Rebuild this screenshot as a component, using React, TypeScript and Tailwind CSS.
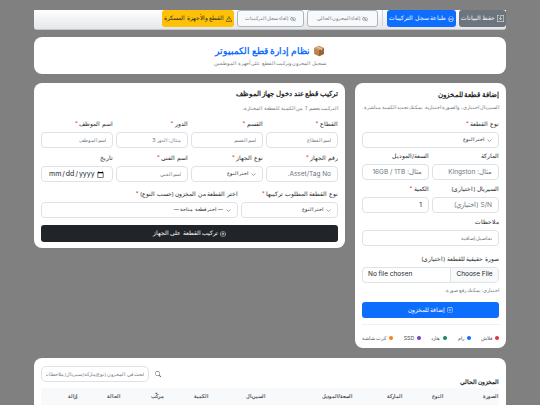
import React from 'react';
import { BsSave, BsPrinter, BsEyeSlash, BsExclamationTriangle, BsGear, BsPlusCircle, BsSearch, BsChevronDown } from 'react-icons/bs';

const labelCls = 'block text-[5.6px] leading-[8px] text-[#212529] mb-[4px]';
const inputCls = 'block w-full h-[16px] bg-white border border-[#dee2e6] rounded-[4px] px-[6px] text-[#212529] placeholder:text-[#6c757d] outline-none';

const Req = () => <span className="text-[#dc3545]"> *</span>;

// latin placeholders read larger than the arabic only ones
const Field: React.FC<{ label: string; req?: boolean; placeholder?: string; value?: string; latin?: boolean }> = ({ label, req, placeholder, value, latin }) => (
  <div>
    <label className={labelCls}>{label}{req && <Req />}</label>
    <input className={`${inputCls} ${latin ? 'text-[6.5px]' : 'text-[5.2px]'}`} placeholder={placeholder} defaultValue={value} />
  </div>
);

const SelectField: React.FC<{ label: string; text: string; req?: boolean }> = ({ label, text, req }) => (
  <div>
    <label className={labelCls}>{label}{req && <Req />}</label>
    <div className="h-[16px] bg-white border border-[#dee2e6] rounded-[4px] flex items-center gap-[3px] px-[6px] text-[5.2px] text-[#212529]">
      <BsChevronDown className="w-[5px] h-[5px]" />
      <span>{text}</span>
    </div>
  </div>
);

const columns = ['الصورة', 'النوع', 'الماركة', 'السعة/الموديل', 'السيريال', 'الكمية', 'مركّب', 'الحالة', 'إزالة'];

const legend = [
  { name: 'فلاش', dot: 'bg-[#dc3545]' },
  { name: 'رام', dot: 'bg-[#0d6efd]' },
  { name: 'هارد', dot: 'bg-[#198754]' },
  { name: 'SSD', dot: 'bg-[#6f42c1]' },
  { name: 'كرت شاشة', dot: 'bg-[#fd7e14]' },
];

export default function App() {
  return (
    <div dir="rtl" className="w-[540px] h-[405px] overflow-hidden bg-[#808080] pt-[10px] px-[34px] font-['Inter',sans-serif] text-[#212529]">
      {/* toolbar */}
      <div className="h-[20px] flex items-start gap-[3px] bg-gradient-to-b from-[#ffffff] to-[#e4e6e9] rounded-b-[3px] border-b border-[#c4c6c9] w-[472px]">
        <button className="h-[17px] w-[47px] bg-[#6c757d] text-white text-[5.5px] rounded-[3px] flex items-center justify-center gap-[2px]">
          <BsSave className="w-[7px] h-[7px]" />حفظ البيانات
        </button>
        <button className="h-[17px] w-[69px] bg-[#0d6efd] text-white text-[5.5px] rounded-[3px] flex items-center justify-center gap-[2px]">
          <BsPrinter className="w-[6px] h-[6px]" />طباعة سجل التركيبات
        </button>
        <div className="w-px h-[16px] bg-[#ced4da] mx-[1px]" />
        <button className="h-[17px] w-[71px] bg-[#f8f9fa] border border-[#adb5bd] text-[#6c757d] text-[5px] rounded-[3px] flex items-center justify-center gap-[2px]">
          <BsEyeSlash className="w-[6px] h-[6px]" />إلغاء المخزون الحالي
        </button>
        <button className="h-[17px] w-[67px] bg-[#f8f9fa] border border-[#adb5bd] text-[#6c757d] text-[5px] rounded-[3px] flex items-center justify-center gap-[2px]">
          <BsEyeSlash className="w-[6px] h-[6px]" />إلغاء سجل التركيبات
        </button>
        <button className="h-[17px] w-[72px] bg-[#ffc107] text-[#212529] text-[5.5px] rounded-[3px] flex items-center justify-center gap-[2px]">
          <BsExclamationTriangle className="w-[6px] h-[6px]" />القطع والأجهزة المسكرة
        </button>
      </div>

      {/* header */}
      <div className="mt-[7px] h-[37px] w-[472px] bg-white rounded-[8px] flex flex-col items-center justify-center">
        <div className="flex items-center gap-[3px] text-[8.5px] leading-[13px] font-bold text-[#0d6efd]">
          <svg viewBox="0 0 16 16" className="w-[12px] h-[12px]">
            <path d="M8 1l6.5 3v8L8 15l-6.5-3V4z" fill="#b9824f" />
            <path d="M8 7l6.5-3v8L8 15z" fill="#96633a" />
            <path d="M8 1l6.5 3L8 7 1.5 4z" fill="#d4a373" />
            <path d="M4.5 2.5l6.5 3v2l1-.5V5L5.5 2z" fill="#e8cfa8" />
          </svg>
          <span>نظام إدارة قطع الكمبيوتر</span>
        </div>
        <div className="text-[5.3px] leading-[8px] text-[#6c757d] mt-[1px]">تسجيل المخزون وتركيب القطع على أجهزة الموظفين</div>
      </div>

      <div className="mt-[9px] flex items-start gap-[10px] w-[472px]">
        {/* add item panel */}
        <div className="w-[151px] h-[265px] bg-white rounded-[8px] px-[7px] pt-[7px]">
          <h3 className="text-[6.5px] leading-[10px] font-bold">إضافة قطعة للمخزون</h3>
          <p className="text-[4.6px] leading-[7px] text-[#6c757d] mt-[4px] whitespace-nowrap">السيريال اختياري، والصورة اختيارية. يمكنك تحديد الكمية مباشرة.</p>
          <div className="mt-[9px]">
            <SelectField label="نوع القطعة" text="اختر النوع" req />
          </div>
          <div className="grid grid-cols-2 gap-x-[3px] gap-y-[5px] mt-[4px]">
            <Field label="الماركة" placeholder="مثال: Kingston" latin />
            <Field label="السعة/الموديل" placeholder="مثال: 16GB / 1TB" latin />
            <Field label="السيريال (اختياري)" placeholder="S/N (اختياري)" latin />
            <Field label="الكمية" req value="1" latin />
          </div>
          <div className="mt-[5px]">
            <Field label="ملاحظات" placeholder="تفاصيل إضافية" />
          </div>
          <div className="mt-[9px]">
            <label className={labelCls}>صورة حقيقية للقطعة (اختياري)</label>
            <div className="h-[16px] border border-[#dee2e6] rounded-[4px] flex items-center text-[6.5px] overflow-hidden">
              <span className="h-full w-[48px] bg-[#f8f9fa] border-l border-[#dee2e6] flex items-center justify-center">Choose File</span>
              <span className="mr-auto pl-[5px]">No file chosen</span>
            </div>
          </div>
          <p className="text-[4.6px] leading-[7px] text-[#6c757d] mt-[4px]">اختياري: يمكنك رفع صورة.</p>
          <button className="mt-[8px] w-full h-[16px] bg-[#0d6efd] text-white text-[5.5px] rounded-[3px] flex items-center justify-center gap-[2px]">
            <BsPlusCircle className="w-[6px] h-[6px]" />إضافة للمخزون
          </button>
          <div className="mt-[6px] border-t border-[#eef0f2]" />
          <div className="mt-[9px] flex items-center justify-between text-[5.2px] leading-[8px] text-[#495057]">
            {legend.map(l => (
              <span key={l.name} className="flex items-center gap-[3px] whitespace-nowrap">
                <span className={`w-[4px] h-[4px] rounded-full ${l.dot}`} />
                {l.name}
              </span>
            ))}
          </div>
        </div>

        {/* install panel */}
        <div className="w-[311px] h-[165px] bg-white rounded-[8px] px-[7px] pt-[6px]">
          <h3 className="text-[7px] leading-[10px] font-bold">تركيب قطع عند دخول جهاز الموظف</h3>
          <p className="text-[5.2px] leading-[7px] text-[#6c757d] mt-[6px]">التركيب يخصم 1 من الكمية للقطعة المختارة.</p>
          <div className="grid grid-cols-4 gap-x-[3px] gap-y-[6px] mt-[8px]">
            <Field label="القطاع" req placeholder="اسم القطاع" />
            <Field label="القسم" req placeholder="اسم القسم" />
            <Field label="الدور" req placeholder="مثال: الدور 3" />
            <Field label="اسم الموظف" req placeholder="اسم الموظف" />
            <Field label="رقم الجهاز" req placeholder="Asset/Tag No." latin />
            <SelectField label="نوع الجهاز" text="اختر النوع" req />
            <Field label="اسم الفني" req placeholder="اسم الفني" />
            <div>
              <label className={labelCls}>تاريخ</label>
              <input type="date" dir="ltr" className={`${inputCls} text-[7px]`} />
            </div>
          </div>
          <div className="grid grid-cols-[97px_1fr] gap-x-[3px] mt-[8px]">
            <SelectField label="نوع القطعة المطلوب تركيبها" text="اختر النوع" req />
            <SelectField label="اختر القطعة من المخزون (حسب النوع)" text="— اختر قطعة متاحة —" req />
          </div>
          <button className="mt-[7px] w-full h-[17px] bg-[#212529] text-white text-[5.5px] rounded-[3px] flex items-center justify-center gap-[2px]">
            <BsGear className="w-[6px] h-[6px]" />تركيب القطعة على الجهاز
          </button>
        </div>
      </div>

      {/* stock table */}
      <div className="mt-[10px] w-[472px] h-[60px] bg-white rounded-[8px] px-[7px] pt-[8px]">
        <div className="flex items-start justify-between h-[16px]">
          <h3 className="text-[6.3px] leading-[10px] font-bold mt-[11px]">المخزون الحالي</h3>
          <div className="flex items-center gap-[6px]">
            <BsSearch className="w-[6px] h-[6px] text-[#495057]" />
            <input className="w-[108px] h-[16px] border border-[#dee2e6] rounded-[5px] px-[4px] text-[4.6px] placeholder:text-[#6c757d] outline-none" placeholder="ابحث في المخزون (نوع/ماركة/سيريال/ملاحظات)" />
          </div>
        </div>
        <div className="mt-[6px] grid grid-cols-[55px_41px_50px_87px_57px_44px_44px_43px_36px] bg-[#f8f9fa] h-[20px] pt-[3px] text-[4.8px] leading-[10px] font-bold text-[#495057]">
          {columns.map(c => (
            <div key={c} className="whitespace-nowrap pr-[1px]">{c}</div>
          ))}
        </div>
      </div>
    </div>
  );
}
